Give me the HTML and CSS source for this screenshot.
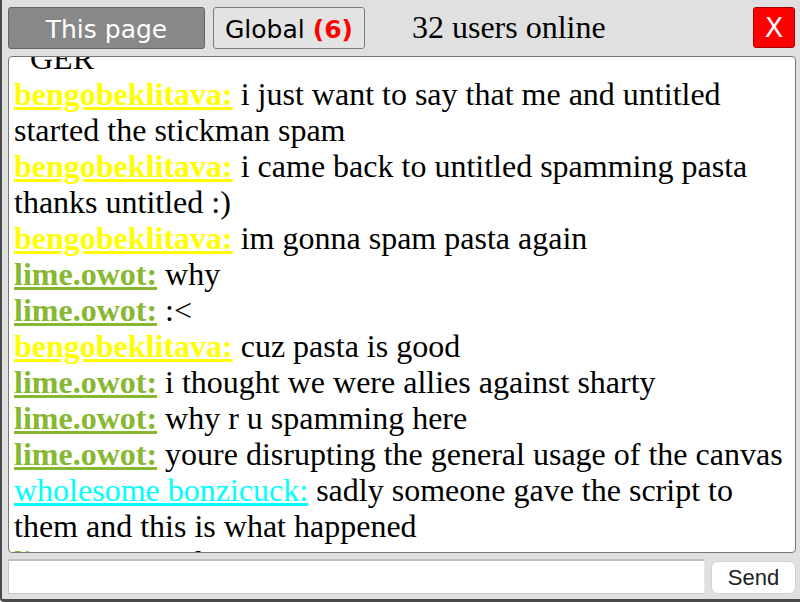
FILE: index.html
```html
<!DOCTYPE html>
<html>
<head>
<meta charset="utf-8">
<link rel="stylesheet" href="styles.css">
</head>
<body>
<div class="win">
  <div class="header">
    <button class="tab tab-active">This page</button>
    <button class="tab tab-global">Global <b class="count">(6)</b></button>
    <span class="online">32 users online</span>
    <button class="close">X</button>
  </div>
  <div class="chat">
    <div class="log">
      <div class="msg">&nbsp;&nbsp;GER</div>
      <div class="msg"><a class="name yellow">bengobeklitava:</a> i just want to say that me and untitled started the stickman spam</div>
      <div class="msg"><a class="name yellow">bengobeklitava:</a> i came back to untitled spamming pasta thanks untitled :)</div>
      <div class="msg"><a class="name yellow">bengobeklitava:</a> im gonna spam pasta again</div>
      <div class="msg"><a class="name lime">lime.owot:</a> why</div>
      <div class="msg"><a class="name lime">lime.owot:</a> :&lt;</div>
      <div class="msg"><a class="name yellow">bengobeklitava:</a> cuz pasta is good</div>
      <div class="msg"><a class="name lime">lime.owot:</a> i thought we were allies against sharty</div>
      <div class="msg"><a class="name lime">lime.owot:</a> why r u spamming here</div>
      <div class="msg"><a class="name lime">lime.owot:</a> youre disrupting the general usage of the canvas</div>
      <div class="msg"><a class="name cyan">wholesome bonzicuck:</a> sadly someone gave the script to them and this is what happened</div>
      <div class="msg"><a class="name lime">lime.owot:</a> nah</div>
    </div>
  </div>
  <div class="inputrow">
    <input class="field" type="text">
    <button class="send">Send</button>
  </div>
</div>
</body>
</html>
```
FILE: styles.css
```css
html, body {
  margin: 0;
  padding: 0;
  width: 800px;
  height: 602px;
  overflow: hidden;
  background: #ffffff;
}
.win {
  box-sizing: border-box;
  width: 800px;
  height: 602px;
  background: #e0e0e0;
  border-left: 2px solid #4a4a4a;
  border-bottom: 3px solid #4a4a4a;
  border-bottom-left-radius: 4px;
  padding: 7px 4px 0 6px;
  display: flex;
  flex-direction: column;
}
.header {
  height: 42px;
  display: flex;
  align-items: center;
  flex: none;
}
.tab {
  box-sizing: border-box;
  height: 42px;
  font-family: "DejaVu Sans", sans-serif;
  font-size: 25px;
  border-radius: 3px;
  margin: 0;
  padding: 4px 11px 0;
  line-height: 36px;
}
.tab-active {
  width: 197px;
  background: #888888;
  border: 1px solid #646464;
  color: #ffffff;
}
.tab-global {
  margin-left: 8px;
  background: #e3e3e3;
  border: 1px solid #7c7c7c;
  color: #000000;
}
.count {
  color: #ff0000;
  font-weight: bold;
}
.online {
  margin-left: 47px;
  font-family: "Liberation Serif", serif;
  font-size: 32px;
  color: #000;
  flex: 1;
  padding-bottom: 2px;
}
.close {
  box-sizing: border-box;
  width: 42px;
  height: 41px;
  margin: 0 1px 1px 0;
  padding: 0;
  background: #ff0000;
  border: 1px solid #a80000;
  border-radius: 3px;
  color: #ffffff;
  font-family: "DejaVu Sans", sans-serif;
  font-size: 27px;
  line-height: 39px;
}
.chat {
  box-sizing: border-box;
  margin-top: 7px;
  height: 497px;
  background: #ffffff;
  border: 1px solid #767676;
  border-radius: 4px;
  overflow: hidden;
  flex: none;
}
.log {
  margin-top: -17px;
  padding: 0 5px;
  font-family: "Liberation Serif", serif;
  font-size: 32px;
  line-height: 36px;
  color: #000;
}
.name {
  text-decoration: underline;
}
.yellow {
  color: #ffff00;
  font-weight: bold;
}
.lime {
  color: #86b832;
  font-weight: bold;
}
.cyan {
  color: #00ffff;
}
.inputrow {
  margin-top: 6px;
  height: 35px;
  display: flex;
  gap: 6px;
  flex: none;
}
.field {
  box-sizing: border-box;
  width: 697px;
  height: 35px;
  margin: 0;
  background: #ffffff;
  border: 1px solid #c4c4c4;
  border-top: 2px solid #c0c0c0;
  border-right-color: #e6e6e6;
  padding: 0 4px;
  outline: none;
}
.send {
  box-sizing: border-box;
  width: 85px;
  height: 33px;
  margin-top: 2px;
  background: #ffffff;
  border: 1px solid #d2d2d2;
  border-radius: 7px;
  font-family: "Liberation Sans", sans-serif;
  font-size: 22px;
  color: #222;
  padding: 0;
}
```
